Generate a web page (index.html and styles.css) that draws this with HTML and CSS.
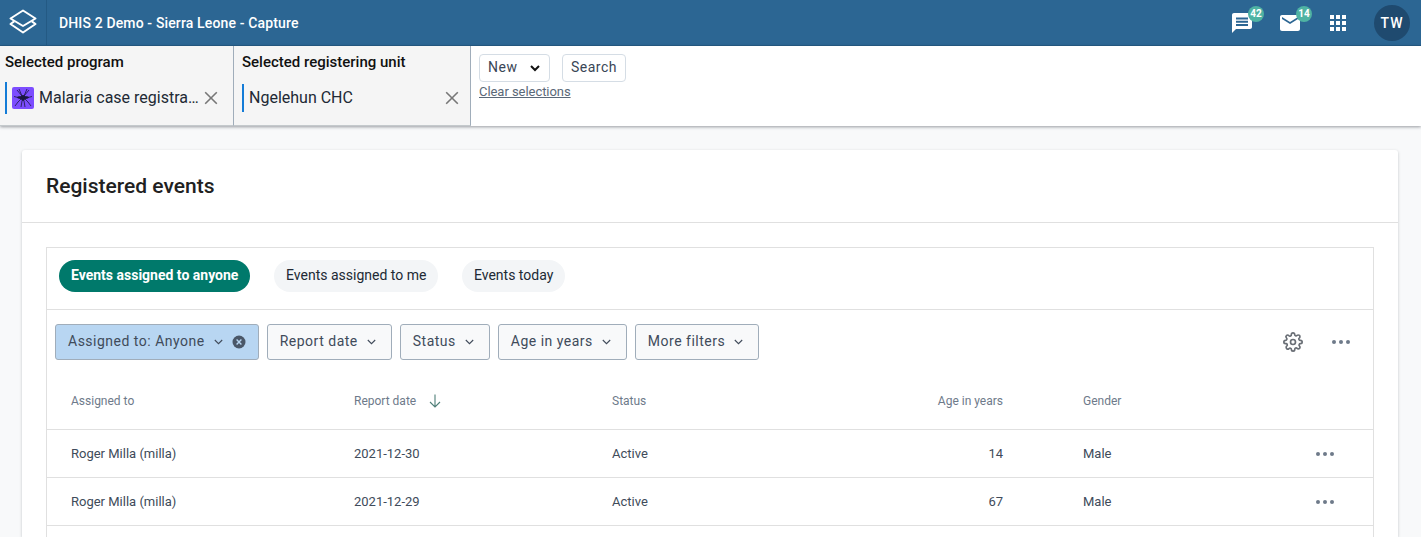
FILE: index.html
```html
<!DOCTYPE html>
<html lang="en">
<head>
<meta charset="UTF-8">
<meta name="viewport" content="width=device-width, initial-scale=1.0">
<title>DHIS 2 Demo - Sierra Leone - Capture</title>
<link rel="stylesheet" href="styles.css">
</head>
<body>

<header class="topbar">
    <div class="logo">
        <svg width="28" height="28" viewBox="0 0 28 28" fill="none" stroke="#fff" stroke-width="2" stroke-linejoin="round">
            <path d="M14 1.5 26.5 9.5 14 17 1.5 9.5Z"/>
            <path d="M5.2 12.4 1.5 15 14 23.5 26.5 15 22.8 12.4"/>
        </svg>
    </div>
    <div class="app-title">DHIS 2 Demo - Sierra Leone - Capture</div>
    <div class="top-icons">
        <div class="top-icon">
            <svg width="24" height="24" viewBox="0 0 24 24" fill="#fff"><path d="M21.99 4c0-1.1-.89-2-1.99-2H4c-1.1 0-2 .9-2 2v12c0 1.1.9 2 2 2h14l4 4-.01-18z" transform="matrix(-1 0 0 1 24 0)"/><path fill="#2c6693" d="M6 6.5h12v2H6zM6 9.8h12v2H6zM6 13h12v2H6z"/></svg>
            <span class="count">42</span>
        </div>
        <div class="top-icon">
            <svg width="24" height="24" viewBox="0 0 24 24" fill="#fff"><path d="M20 4H4c-1.1 0-2 .9-2 2v12c0 1.1.9 2 2 2h16c1.1 0 2-.9 2-2V6c0-1.1-.9-2-2-2zm0 4-8 5-8-5V6l8 5 8-5v2z"/></svg>
            <span class="count">14</span>
        </div>
        <div class="top-icon">
            <svg width="24" height="24" viewBox="0 0 24 24" fill="#fff"><path d="M4 4h4v4H4zM10 4h4v4h-4zM16 4h4v4h-4zM4 10h4v4H4zM10 10h4v4h-4zM16 10h4v4h-4zM4 16h4v4H4zM10 16h4v4h-4zM16 16h4v4h-4z"/></svg>
        </div>
        <div class="avatar">TW</div>
    </div>
</header>

<section class="selector">
    <div class="selected program">
        <h4>Selected program</h4>
        <div class="selected-value">
            <span class="program-icon">
                <svg width="22" height="22" viewBox="0 0 22 22" fill="none" stroke="#1b1840" stroke-width=".8">
                    <ellipse cx="11" cy="10.5" rx="6" ry="1.6" fill="#1b1840" stroke="none"/>
                    <ellipse cx="11" cy="11" rx="2" ry="3" fill="#1b1840" stroke="none"/>
                    <path d="M2 9.5 6 10.5M20 9.5 16 10.5"/>
                    <path d="M5 3l5 6M17 3l-5 6M7 2l3 7M15 2l-3 7"/>
                    <path d="M3 19l3-4 3-3M19 19l-3-4-3-3M9 20l1-6M13 20l-1-6"/>
                </svg>
            </span>
            <span class="value-text">Malaria case registra…</span>
            <svg class="clear" width="14" height="14" viewBox="0 0 14 14" stroke="#777" stroke-width="1.6"><path d="M1.2 1.2l11.6 11.6M12.8 1.2 1.2 12.8"/></svg>
        </div>
    </div>
    <div class="selected unit">
        <h4>Selected registering unit</h4>
        <div class="selected-value">
            <span class="value-text">Ngelehun CHC</span>
            <svg class="clear" width="14" height="14" viewBox="0 0 14 14" stroke="#777" stroke-width="1.6"><path d="M1.2 1.2l11.6 11.6M12.8 1.2 1.2 12.8"/></svg>
        </div>
    </div>
    <div class="actions">
        <div class="action-btns">
            <button class="small-btn new-btn"><span>New</span>
                <svg width="10" height="7" viewBox="0 0 10 7" fill="none" stroke="#111" stroke-width="2"><path d="M1 1l4 4 4-4"/></svg>
            </button>
            <button class="small-btn"><span>Search</span></button>
        </div>
        <a class="clear-link" href="#">Clear selections</a>
    </div>
</section>

<main class="content">
    <div class="card">
        <h2 class="card-title">Registered events</h2>
        <div class="card-body">
            <div class="list-box">
                <div class="tabs">
                    <span class="chip active">Events assigned to anyone</span>
                    <span class="chip">Events assigned to me</span>
                    <span class="chip">Events today</span>
                </div>
                <div class="filters">
                    <button class="filter selected-filter"><span>Assigned to: Anyone</span>
                        <svg class="chev" width="9" height="6" viewBox="0 0 9 6" fill="none" stroke="#404b5a" stroke-width="1.1"><path d="M.8 1l3.7 3.7L8.2 1"/></svg>
                        <svg class="remove" width="14" height="14" viewBox="0 0 14 14"><circle cx="7" cy="7" r="6.5" fill="#4a5768"/><path d="M4.6 4.6l4.8 4.8M9.4 4.6 4.6 9.4" stroke="#b8d6f2" stroke-width="1.4"/></svg>
                    </button>
                    <button class="filter"><span>Report date</span>
                        <svg class="chev" width="9" height="6" viewBox="0 0 9 6" fill="none" stroke="#404b5a" stroke-width="1.1"><path d="M.8 1l3.7 3.7L8.2 1"/></svg>
                    </button>
                    <button class="filter"><span>Status</span>
                        <svg class="chev" width="9" height="6" viewBox="0 0 9 6" fill="none" stroke="#404b5a" stroke-width="1.1"><path d="M.8 1l3.7 3.7L8.2 1"/></svg>
                    </button>
                    <button class="filter"><span>Age in years</span>
                        <svg class="chev" width="9" height="6" viewBox="0 0 9 6" fill="none" stroke="#404b5a" stroke-width="1.1"><path d="M.8 1l3.7 3.7L8.2 1"/></svg>
                    </button>
                    <button class="filter"><span>More filters</span>
                        <svg class="chev" width="9" height="6" viewBox="0 0 9 6" fill="none" stroke="#404b5a" stroke-width="1.1"><path d="M.8 1l3.7 3.7L8.2 1"/></svg>
                    </button>
                    <div class="filter-tools">
                        <svg width="20" height="20" viewBox="0 0 24 24" fill="none" stroke="#6a6f76" stroke-width="2" stroke-linejoin="round"><circle cx="12" cy="12" r="3"/><path d="M19.4 15a1.65 1.65 0 0 0 .33 1.82l.06.06a2 2 0 1 1-2.83 2.83l-.06-.06a1.65 1.65 0 0 0-2.8 1.17V21a2 2 0 1 1-4 0v-.09a1.65 1.65 0 0 0-2.82-1.11l-.06.06a2 2 0 1 1-2.83-2.83l.06-.06A1.65 1.65 0 0 0 3.09 14H3a2 2 0 1 1 0-4h.09a1.65 1.65 0 0 0 1.11-2.82l-.06-.06a2 2 0 1 1 2.83-2.83l.06.06A1.65 1.65 0 0 0 10 3.09V3a2 2 0 1 1 4 0v.09a1.65 1.65 0 0 0 2.82 1.11l.06-.06a2 2 0 1 1 2.83 2.83l-.06.06A1.65 1.65 0 0 0 20.91 10H21a2 2 0 1 1 0 4h-.09a1.65 1.65 0 0 0-1.51 1z"/></svg>
                        <span class="dots"><i></i><i></i><i></i></span>
                    </div>
                </div>
                <table class="events">
                    <thead>
                        <tr>
                            <th class="col-assigned">Assigned to</th>
                            <th class="col-date">Report date
                                <svg class="sort" width="12" height="14" viewBox="0 0 12 14" fill="none" stroke="#4f7f78" stroke-width="1.1"><path d="M6 .5v12.5M1 8l5 5 5-5"/></svg>
                            </th>
                            <th class="col-status">Status</th>
                            <th class="col-age">Age in years</th>
                            <th class="col-gender">Gender</th>
                            <th class="col-menu"></th>
                        </tr>
                    </thead>
                    <tbody>
                        <tr>
                            <td>Roger Milla (milla)</td>
                            <td>2021-12-30</td>
                            <td>Active</td>
                            <td class="col-age">14</td>
                            <td class="col-gender">Male</td>
                            <td class="col-menu"><span class="dots"><i></i><i></i><i></i></span></td>
                        </tr>
                        <tr>
                            <td>Roger Milla (milla)</td>
                            <td>2021-12-29</td>
                            <td>Active</td>
                            <td class="col-age">67</td>
                            <td class="col-gender">Male</td>
                            <td class="col-menu"><span class="dots"><i></i><i></i><i></i></span></td>
                        </tr>
                    </tbody>
                </table>
            </div>
        </div>
    </div>
</main>

</body>
</html>
```

FILE: styles.css
```css
* {
    box-sizing: border-box;
}
html, body {
    height: 100%;
    overflow: hidden;
}
body {
    display: flex;
    flex-direction: column;
    margin: 0;
    font-family: Roboto, sans-serif;
    background: #f8f9fa;
    color: #212934;
}

/* header bar */
.topbar {
    display: flex;
    flex: none;
    align-items: center;
    height: 46px;
    background: #2c6693;
    border-bottom: 1px solid #245a84;
    color: #fff;
}
.logo {
    display: flex;
    align-items: center;
    justify-content: center;
    width: 47px;
    height: 100%;
    padding-right: 1px;
    border-right: 1px solid #245a84;
}
.app-title {
    margin-left: 12px;
    font-size: 14px;
    font-weight: 500;
    letter-spacing: 0.14px;
}
.top-icons {
    display: flex;
    align-items: center;
    margin-left: auto;
    padding-right: 11px;
}
.top-icon {
    position: relative;
    display: flex;
    width: 24px;
    height: 24px;
    margin-right: 24px;
}
.count {
    position: absolute;
    top: -5px;
    left: 18px;
    width: 16px;
    height: 16px;
    border-radius: 50%;
    background: #4fb3a3;
    color: #fff;
    font-size: 10px;
    font-weight: 700;
    line-height: 16px;
    text-align: center;
}
.avatar {
    width: 36px;
    height: 36px;
    border-radius: 50%;
    background: #1f4a6f;
    font-size: 14px;
    font-weight: 500;
    letter-spacing: 1px;
    line-height: 36px;
    text-align: center;
}

/* program / org unit selector */
.selector {
    display: flex;
    flex: none;
    height: 80px;
    background: #fff;
    box-shadow: 0 1px 3px rgba(33, 41, 52, 0.45);
    position: relative;
}
.selected {
    width: 234px;
    padding: 7px 0 0 5px;
    background: #f5f5f5;
    border-right: 1px solid #a0adba;
    border-bottom: 1px solid #c4c9cc;
}
.selected.unit {
    width: 237px;
    padding-left: 8px;
}
.selected h4 {
    margin: 0;
    font-size: 15px;
    font-weight: 500;
    line-height: 18px;
    color: #111;
}
.selected-value {
    display: flex;
    align-items: center;
    height: 28px;
    margin-top: 13px;
    padding-left: 5px;
    border-left: 2px solid #147cd7;
    font-size: 16px;
    color: #212934;
}
.program .selected-value {
    height: 32px;
    margin-top: 11px;
}
.program-icon {
    display: flex;
    width: 22px;
    height: 22px;
    margin-right: 5px;
    border-radius: 2px;
    background: #7c4dff;
}
.value-text {
    margin-top: -2px;
    white-space: nowrap;
}
.clear {
    margin-left: auto;
    margin-right: 11px;
}
.program .clear {
    margin-right: 15px;
}
.actions {
    padding: 8px 0 0 8px;
}
.action-btns {
    display: flex;
    gap: 12px;
}
.small-btn {
    display: flex;
    align-items: center;
    height: 28px;
    padding: 0 8px 2px;
    background: #fff;
    border: 1px solid #d5dde5;
    border-radius: 4px;
    font-family: Roboto, sans-serif;
    font-size: 14px;
    letter-spacing: 0.5px;
    color: #3a4656;
}
.new-btn {
    width: 71px;
    justify-content: space-between;
    padding-right: 9px;
}
.new-btn svg {
    margin-top: 2px;
}
.clear-link {
    display: block;
    margin-top: 2px;
    font-size: 13px;
    letter-spacing: -0.05px;
    line-height: 15px;
    color: #5a6878;
}

/* main card */
.content {
    display: flex;
    flex: 1;
    min-height: 0;
    padding: 24px 23px 0 22px;
}
.card {
    display: flex;
    flex: 1;
    flex-direction: column;
    background: #fff;
    border-radius: 3px 3px 0 0;
    box-shadow: 0 1px 3px rgba(33, 41, 52, 0.25);
}
.card-title {
    flex: none;
    height: 73px;
    margin: 0;
    padding: 0 24px;
    border-bottom: 1px solid #e0e0e0;
    font-size: 21px;
    font-weight: 500;
    line-height: 72px;
    color: #212121;
}
.card-body {
    display: flex;
    flex: 1;
    min-height: 0;
    padding: 24px 24px 0;
}
.list-box {
    flex: 1;
    border: 1px solid #e0e0e0;
    border-bottom: 0;
}
.tabs {
    display: flex;
    align-items: flex-start;
    gap: 23.6px;
    height: 62px;
    padding: 12px 12px 0;
    border-bottom: 1px solid #e0e0e0;
}
.chip {
    height: 32px;
    padding: 0 12px;
    border-radius: 16px;
    background: #f3f5f7;
    font-size: 14px;
    line-height: 30px;
    color: #212934;
}
.chip.active {
    background: #00796b;
    color: #fff;
    font-weight: 700;
}
.filters {
    display: flex;
    align-items: center;
    gap: 8px;
    height: 64px;
    padding: 14px 8px;
}
.filter {
    display: flex;
    align-items: center;
    height: 36px;
    padding: 0 15px 2px 12px;
    background: #f8f9fa;
    border: 1px solid #a0adba;
    border-radius: 3px;
    font-family: Roboto, sans-serif;
    font-size: 14px;
    letter-spacing: 0.5px;
    color: #404b5a;
}
.selected-filter {
    padding-right: 12px;
    background: #b8d6f2;
}
.chev {
    margin: 2px 0 0 9px;
}
.remove {
    margin: 2px 0 0 9px;
}
.filter-tools {
    display: flex;
    align-items: center;
    gap: 29px;
    margin-left: auto;
    padding-right: 15px;
}
.dots {
    display: inline-flex;
    gap: 3px;
    vertical-align: middle;
}
.dots i {
    width: 4px;
    height: 4px;
    border-radius: 50%;
    background: #6e7a8a;
}

/* events table */
.events {
    width: 100%;
    border-collapse: collapse;
    table-layout: fixed;
    font-size: 13px;
}
.events th {
    height: 55px;
    padding: 0;
    font-size: 12px;
    font-weight: 400;
    text-align: left;
    color: #6e7a8a;
}
.events td {
    height: 48px;
    padding: 0;
    border-top: 1px solid #e0e0e0;
    border-bottom: 1px solid #e0e0e0;
    color: #404b5a;
}
.events th:first-child, .events td:first-child {
    padding-left: 24px;
}
.col-assigned {
    width: 307px;
}
.col-date {
    width: 258px;
}
.col-status {
    width: 199px;
}
.col-age {
    width: 192px;
}
.events .col-age {
    text-align: right;
}
.col-gender {
    width: 200px;
}
.events .col-gender {
    padding-left: 80px;
}
.events .col-menu {
    padding-right: 39px;
    text-align: right;
}
.sort {
    margin-left: 10px;
    vertical-align: -3px;
}
```
